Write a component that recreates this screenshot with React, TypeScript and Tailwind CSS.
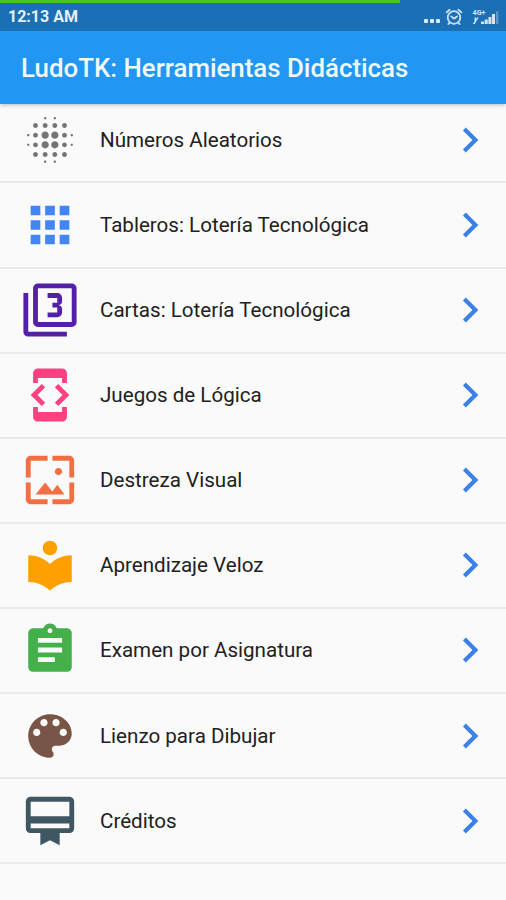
import type { IconType } from "react-icons";
import {
  MdApps,
  MdAssignment,
  MdBlurOn,
  MdCardMembership,
  MdChevronRight,
  MdDeveloperMode,
  MdFilter3,
  MdLocalLibrary,
  MdWallpaper,
} from "react-icons/md";

type MenuItem = {
  title: string;
  icon: IconType;
  color: string;
};

// older, rounder palette than the one shipped in react-icons
const PaletteIcon: IconType = ({ className }) => (
  <svg className={className} viewBox="0 0 24 24" fill="currentColor">
    <path d="M12 3c-4.97 0-9 4.03-9 9s4.03 9 9 9c.83 0 1.5-.67 1.5-1.5 0-.39-.15-.74-.39-1.01-.23-.26-.38-.61-.38-.99 0-.83.67-1.5 1.5-1.5H16c2.76 0 5-2.24 5-5 0-4.42-4.03-8-9-8zm-5.5 9c-.83 0-1.5-.67-1.5-1.5S5.67 9 6.5 9 8 9.67 8 10.5 7.33 12 6.5 12zm3-4C8.67 8 8 7.33 8 6.5S8.67 5 9.5 5s1.5.67 1.5 1.5S10.33 8 9.5 8zm5 0c-.83 0-1.5-.67-1.5-1.5S13.67 5 14.5 5s1.5.67 1.5 1.5S15.33 8 14.5 8zm3 4c-.83 0-1.5-.67-1.5-1.5S16.67 9 17.5 9s1.5.67 1.5 1.5-.67 1.5-1.5 1.5z" />
  </svg>
);

const items: MenuItem[] = [
  { title: "Números Aleatorios", icon: MdBlurOn, color: "text-[#757575]" },
  {
    title: "Tableros: Lotería Tecnológica",
    icon: MdApps,
    color: "text-[#4285f4]",
  },
  {
    title: "Cartas: Lotería Tecnológica",
    icon: MdFilter3,
    color: "text-[#5420a8]",
  },
  { title: "Juegos de Lógica", icon: MdDeveloperMode, color: "text-[#ff4081]" },
  { title: "Destreza Visual", icon: MdWallpaper, color: "text-[#f16f43]" },
  { title: "Aprendizaje Veloz", icon: MdLocalLibrary, color: "text-[#ffa000]" },
  {
    title: "Examen por Asignatura",
    icon: MdAssignment,
    color: "text-[#43b049]",
  },
  { title: "Lienzo para Dibujar", icon: PaletteIcon, color: "text-[#795548]" },
  { title: "Créditos", icon: MdCardMembership, color: "text-[#3f5663]" },
];

const AlarmIcon = () => (
  <svg
    className="ml-[5px] h-[18px] w-[18px] fill-none stroke-[#c9e2f5]"
    viewBox="0 0 18 18"
    strokeWidth="1.8"
    strokeLinecap="round"
  >
    <circle cx="9" cy="9.5" r="6.3" />
    <path d="M1.6 4.4 4.6 1.8M16.4 4.4l-3-2.6M6.2 8.4 9 10.6l3-2.2M4.6 14.6l-1.2 1.4M13.4 14.6l1.2 1.4" />
  </svg>
);

const SignalIcon = () => (
  <svg
    className="ml-[9px] h-[16px] w-[28px] fill-[#d3e8f7]"
    viewBox="0 0 28 16"
  >
    <text
      x="0.5"
      y="6"
      fontSize="7"
      fontWeight="700"
      fontFamily="Roboto, sans-serif"
      textLength="13"
      lengthAdjust="spacingAndGlyphs"
    >
      4G+
    </text>
    <path d="M2.5 8.5h1.8v4L2.6 15H.8l1.7-2.5zM5 8.5h1.6L5 11.5H4.2z" />
    <path d="M9 12.5h3V15H9zM12.7 10.5h3V15h-3zM16.4 8h3v7h-3zM20 5h3v10h-3z" />
    <path d="M24 2.5h2.4V15H24z" opacity="0.35" />
  </svg>
);

const StatusBar = () => (
  <div className="relative flex h-[31px] items-center bg-[#1b6fb5] pr-[6px] pl-2 pt-[3px]">
    <div className="absolute top-0 left-0 h-[3px] w-[400px] bg-[#4bc41c]" />
    <span className="flex-1 text-[16px] font-bold text-[#e3f1fa]">
      12:13 AM
    </span>
    <div className="mt-[7px] flex gap-[2px]">
      <i className="h-[4px] w-[4px] rounded-[1px] bg-[#dcedf9]" />
      <i className="h-[4px] w-[4px] rounded-[1px] bg-[#dcedf9]" />
      <i className="h-[4px] w-[4px] rounded-[1px] bg-[#dcedf9]" />
    </div>
    <AlarmIcon />
    <SignalIcon />
  </div>
);

const MenuRow = ({ title, icon: Icon, color }: MenuItem) => (
  <li className="flex h-[85.1px] items-center border-b-2 border-[#ebebeb] pr-[11px] pl-[21px]">
    <Icon className={`h-[58px] w-[58px] flex-none ${color}`} />
    <span className="ml-[21px] flex-1 pt-[1px] text-[20.6px] whitespace-nowrap text-[#212121]">
      {title}
    </span>
    <MdChevronRight className="h-[50px] w-[50px] flex-none text-[#3b80e4]" />
  </li>
);

const App = () => {
  return (
    <div className="h-[900px] w-[506px] overflow-hidden bg-[#fafafa] font-[Roboto,sans-serif]">
      <header className="relative z-10 shadow-[0_1px_4px_rgba(0,0,0,0.25)]">
        <StatusBar />
        <div className="flex h-[72.5px] items-center bg-[#2196f3] pl-[21px]">
          <h1 className="pt-[3px] text-[25.85px] font-medium whitespace-nowrap text-[#effaf5]">
            LudoTK: Herramientas Didácticas
          </h1>
        </div>
      </header>
      {/* the list starts slightly under the app bar, as if scrolled */}
      <ul className="-mt-[5.2px]">
        {items.map((item) => (
          <MenuRow key={item.title} {...item} />
        ))}
      </ul>
    </div>
  );
};

export default App;
